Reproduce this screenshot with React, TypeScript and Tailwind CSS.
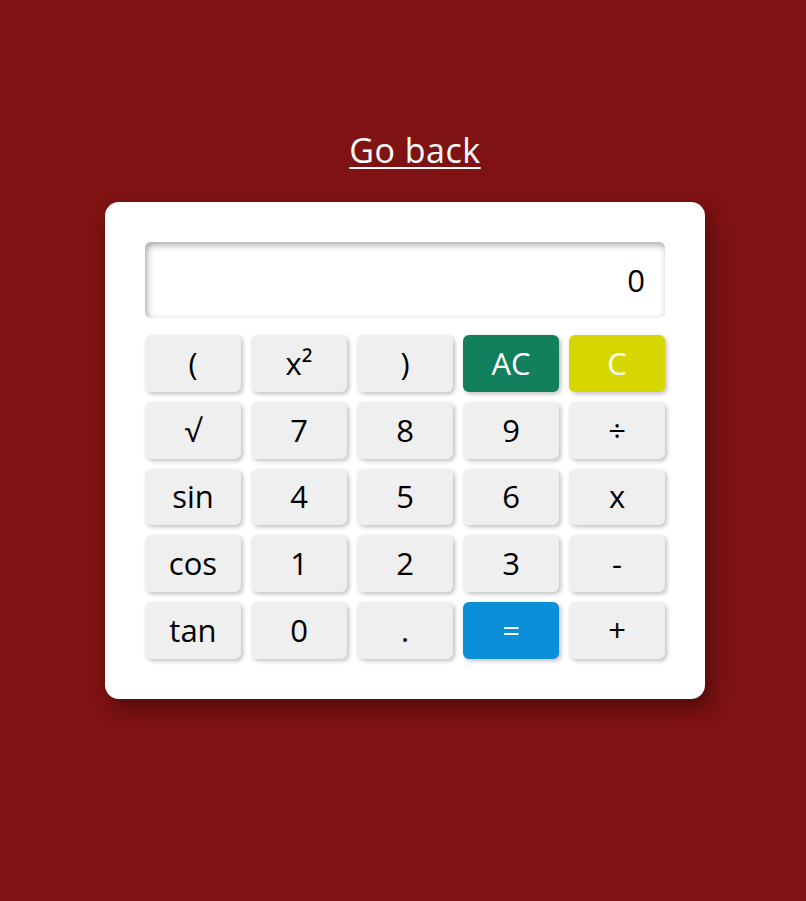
import React from "react";

type Key = { label: React.ReactNode; tone?: "green" | "yellow" | "blue" };

const keys: Key[] = [
  { label: "(" },
  { label: <>x²</> },
  { label: ")" },
  { label: "AC", tone: "green" },
  { label: "C", tone: "yellow" },
  { label: "√" },
  { label: "7" },
  { label: "8" },
  { label: "9" },
  { label: "÷" },
  { label: "sin" },
  { label: "4" },
  { label: "5" },
  { label: "6" },
  { label: "x" },
  { label: "cos" },
  { label: "1" },
  { label: "2" },
  { label: "3" },
  { label: "-" },
  { label: "tan" },
  { label: "0" },
  { label: "." },
  { label: "=", tone: "blue" },
  { label: "+" },
];

const toneClass = (tone?: Key["tone"]) => {
  switch (tone) {
    case "green":
      return "bg-[#12805c] text-white";
    case "yellow":
      return "bg-[#d6d600] text-white";
    case "blue":
      return "bg-[#0c8fd9] text-white";
    default:
      return "bg-[#efefef] text-black";
  }
};

export default function App() {
  return (
    <div
      className="min-h-screen w-full bg-[#7f1212] flex flex-col items-center pt-[128px] pl-[4px]"
      style={{ fontFamily: '"Open Sans", "Liberation Sans", sans-serif' }}
    >
      <a href="#" className="ml-[20px] text-white text-[34px] leading-[44px] underline underline-offset-[4px] decoration-2 tracking-[0.5px]">
        Go back
      </a>

      <div className="mt-[30px] w-[600px] bg-white rounded-[14px] p-10 shadow-[6px_10px_20px_rgba(0,0,0,0.35)]">
        <div className="h-[76px] rounded-[6px] bg-white shadow-[inset_2px_3px_7px_rgba(0,0,0,0.35)] flex items-center justify-end pr-5 text-[31px] text-black">
          0
        </div>

        <div className="mt-[17px] grid grid-cols-5 gap-x-[10px] gap-y-[10px]">
          {keys.map((k, i) => (
            <button
              key={i}
              className={`h-[56.75px] rounded-[6px] text-[31px] leading-none flex items-center justify-center shadow-[2px_2px_4px_rgba(0,0,0,0.25)] ${toneClass(k.tone)}`}
            >
              {k.label}
            </button>
          ))}
        </div>
      </div>
    </div>
  );
}
